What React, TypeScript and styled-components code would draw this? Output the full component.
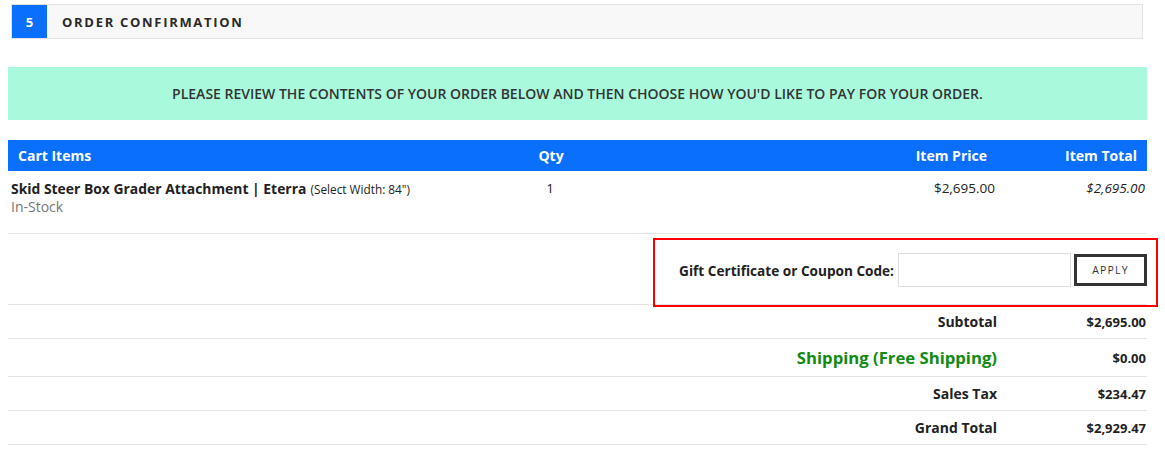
import styled, { createGlobalStyle } from "styled-components";

const GlobalStyle = createGlobalStyle`
  body {
    margin: 0;
    background: #fff;
    font-family: "Open Sans", "Liberation Sans", sans-serif;
    color: #333;
  }
`;

const Page = styled.div`
  width: 1139px;
  padding: 4px 0 0 8px;
`;

const StepHeader = styled.div`
  display: flex;
  align-items: center;
  height: 33px;
  margin: 0 4px 0 3px;
  background: #f8f8f8;
  border: 1px solid #e2e2e2;
`;

const StepNumber = styled.div`
  width: 35px;
  align-self: stretch;
  display: flex;
  align-items: center;
  justify-content: center;
  background: #0a6ffd;
  color: #fff;
  font-weight: 700;
  font-size: 13px;
`;

const StepTitle = styled.div`
  margin-left: 15px;
  font-size: 13px;
  font-weight: 700;
  letter-spacing: 1.7px;
  color: #2a2a2a;
`;

const Notice = styled.div`
  margin-top: 28px;
  height: 53px;
  display: flex;
  align-items: center;
  justify-content: center;
  background: #a9fadc;
  font-size: 14px;
  font-weight: 600;
  color: #333;
`;

const Table = styled.div`
  margin-top: 20px;
`;

const Row = styled.div`
  display: grid;
  grid-template-columns: 462px 162px 365px 150px;
  align-items: center;
  border-bottom: 1px solid #e4e4e4;
  box-sizing: border-box;
`;

const HeadRow = styled(Row)`
  background: #0a6ffd;
  border-bottom: none;
  min-height: 31px;
`;

const HeadCell = styled.div<{ $align?: string }>`
  color: #fff;
  font-weight: 700;
  font-size: 14px;
  text-align: ${(p) => p.$align ?? "left"};
  padding: ${(p) => (p.$align === "right" ? "0 10px 0 0" : p.$align === "center" ? "0" : "0 0 0 10px")};
`;

const Cell = styled.div<{ $align?: string; $italic?: boolean }>`
  font-size: 13.5px;
  color: #222;
  text-align: ${(p) => p.$align ?? "left"};
  font-style: ${(p) => (p.$italic ? "italic" : "normal")};
  padding-right: 2px;
`;

const ItemRow = styled(Row)`
  align-items: start;
  padding: 8px 0 17px;
`;

const ItemCell = styled.div`
  padding-left: 3px;
  line-height: 18px;
`;

const ItemName = styled.span`
  font-weight: 700;
  font-size: 13.9px;
  color: #222;
`;

const ItemOption = styled.span`
  font-size: 11.8px;
  color: #222;
`;

const Stock = styled.div`
  font-size: 14px;
  color: #777;
`;

const CouponRow = styled.div`
  display: flex;
  justify-content: flex-end;
  border-bottom: 1px solid #e4e4e4;
  height: 71px;
  box-sizing: border-box;
  padding-top: 19px;
`;

const CouponForm = styled.div`
  position: relative;
  display: flex;
  align-items: center;
  height: 34px;
`;

const Highlight = styled.div`
  position: absolute;
  left: -26px;
  right: -11px;
  top: -15px;
  bottom: -20px;
  border: 2px solid #f00;
  pointer-events: none;
`;

const CouponLabel = styled.label`
  font-weight: 700;
  font-size: 13.6px;
  color: #222;
  margin-right: 4px;
`;

const CouponInput = styled.input`
  width: 173px;
  height: 34px;
  box-sizing: border-box;
  border: 1px solid #ddd;
  margin: 0;
  outline: none;
`;

const ApplyButton = styled.button`
  margin-left: 3px;
  width: 73px;
  height: 32px;
  background: #fff;
  border: 3px solid #333;
  font-family: "Open Sans", "Liberation Sans", sans-serif;
  font-size: 10.5px;
  letter-spacing: 1.2px;
  color: #333;
  padding: 0;
`;

const TotalRow = styled.div<{ $height?: number }>`
  display: grid;
  grid-template-columns: 1fr 150px;
  align-items: center;
  height: ${(p) => p.$height ?? 34}px;
  border-bottom: 1px solid #e4e4e4;
  box-sizing: border-box;
`;

const TotalLabel = styled.div<{ $shipping?: boolean }>`
  text-align: right;
  font-weight: 700;
  font-size: ${(p) => (p.$shipping ? "16.7px" : "14px")};
  color: ${(p) => (p.$shipping ? "#128a12" : "#222")};
`;

const TotalValue = styled.div`
  text-align: right;
  padding-right: 1px;
  font-weight: 700;
  font-size: 13px;
  color: #222;
`;

const totals = [
  { label: "Subtotal", value: "$2,695.00" },
  { label: "Shipping (Free Shipping)", value: "$0.00", shipping: true },
  { label: "Sales Tax", value: "$234.47" },
  { label: "Grand Total", value: "$2,929.47" },
];

const App = () => {
  return (
    <Page>
      <GlobalStyle />
      <StepHeader>
        <StepNumber>5</StepNumber>
        <StepTitle>ORDER CONFIRMATION</StepTitle>
      </StepHeader>
      <Notice>
        PLEASE REVIEW THE CONTENTS OF YOUR ORDER BELOW AND THEN CHOOSE HOW YOU'D LIKE TO PAY FOR YOUR ORDER.
      </Notice>
      <Table>
        <HeadRow>
          <HeadCell>Cart Items</HeadCell>
          <HeadCell $align="center">Qty</HeadCell>
          <HeadCell $align="right">Item Price</HeadCell>
          <HeadCell $align="right">Item Total</HeadCell>
        </HeadRow>
        <ItemRow>
          <ItemCell>
            <ItemName>Skid Steer Box Grader Attachment | Eterra</ItemName>{" "}
            <ItemOption>(Select Width: 84")</ItemOption>
            <Stock>In-Stock</Stock>
          </ItemCell>
          <Cell $align="center">1</Cell>
          <Cell $align="right">$2,695.00</Cell>
          <Cell $align="right" $italic>
            $2,695.00
          </Cell>
        </ItemRow>
        <CouponRow>
          <CouponForm>
            <Highlight />
            <CouponLabel>Gift Certificate or Coupon Code:</CouponLabel>
            <CouponInput type="text" />
            <ApplyButton>APPLY</ApplyButton>
          </CouponForm>
        </CouponRow>
        {totals.map((t) => (
          <TotalRow key={t.label} $height={t.shipping ? 38 : 34}>
            <TotalLabel $shipping={t.shipping}>{t.label}</TotalLabel>
            <TotalValue>{t.value}</TotalValue>
          </TotalRow>
        ))}
      </Table>
    </Page>
  );
};

export default App;
